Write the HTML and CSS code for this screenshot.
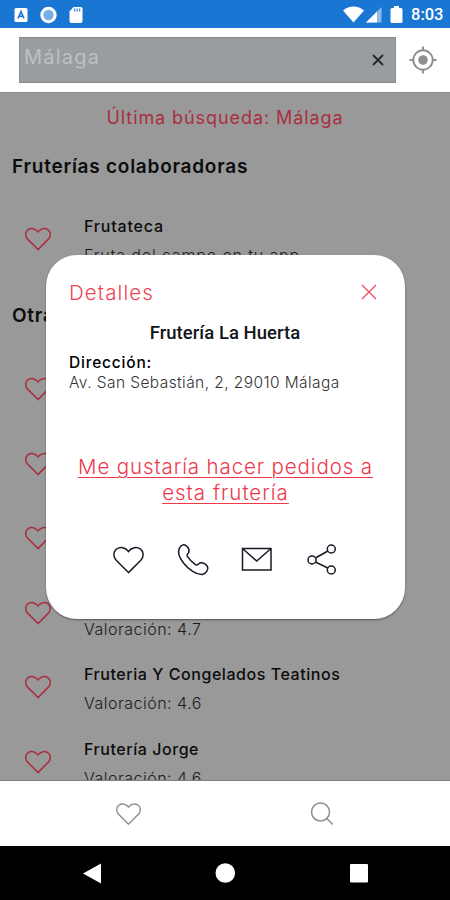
FILE: index.html
```html
<!DOCTYPE html>
<html lang="es">
<head>
<meta charset="utf-8">
<title>Fruterías</title>
<link rel="stylesheet" href="styles.css">
</head>
<body>
<svg width="0" height="0" class="defs">
  <symbol id="heart" viewBox="0 0 32 28"><path d="M16 27 L3.300 14.200 C-0.200 10.400 0.200 5.300 3.600 2.800 C7.400 0 12.800 0.800 16 5.200 C19.200 0.800 24.600 0 28.400 2.800 C31.800 5.300 32.200 10.400 28.700 14.200 Z"/></symbol>
</svg>
<div class="phone">
  <div class="status">
    <svg class="st-left" width="72" height="20" viewBox="0 0 72 20">
      <rect x="0.500" y="3" width="13" height="14" rx="1.500" fill="#fff"/>
      <path d="M4 13.500 L7 6.500 L10 13.500 M5 11.300 H9" fill="none" stroke="#1976d2" stroke-width="1.600"/>
      <circle cx="34.500" cy="10" r="6.700" fill="#75aee7" stroke="#fff" stroke-width="3"/>
      <path d="M59.500 2 H67 Q68.500 2 68.500 3.500 V16 Q68.500 18 67 18 H57 Q55.500 18 55.500 16 V6.500 Z" fill="#fff"/>
      <path d="M60.700 3.500v3M63.200 3.500v3M65.700 3.500v3" stroke="#1976d2" stroke-width="1.100"/>
    </svg>
    <svg class="st-right" width="62" height="20" viewBox="0 0 62 20">
      <path d="M0 5.500 C6 0.300 15 0.300 21 5.500 L10.500 17.500 Z" fill="#fff"/>
      <path d="M38.500 2 V17.500 H23 Z" fill="#8dbbe9"/>
      <path d="M34 6.500 V17.500 H23 Z" fill="#fff"/>
      <path d="M51 1 h5 v2 h2 q1.500 0 1.500 1.500 v12 q0 1.500 -1.500 1.500 h-9 q-1.500 0 -1.500 -1.500 v-12 q0 -1.500 1.500 -1.500 h2 z" fill="#fff"/>
    </svg>
    <span class="time">8:03</span>
  </div>
  <div class="header">
    <div class="search">
      <span class="query">Málaga</span>
      <svg width="12" height="12" viewBox="0 0 12 12"><path d="M1 1 L11 11 M11 1 L1 11" stroke="#23282b" stroke-width="1.800"/></svg>
    </div>
    <svg class="locate" width="28" height="28" viewBox="0 0 28 28">
      <g fill="none" stroke="#8f8f8f" stroke-width="1.900"><circle cx="14" cy="14" r="9.700"/><path d="M14 0.500 V5 M14 23 V27.500 M0.500 14 H5 M23 14 H27.500"/></g>
      <circle cx="14" cy="14" r="4.800" fill="#8f8f8f"/>
    </svg>
  </div>
  <div class="content">
    <div class="last"><span>Última búsqueda: Málaga</span></div>
    <h2 class="first-title">Fruterías colaboradoras</h2>
    <div class="row"><svg class="fav"><use href="#heart"/></svg><div class="info"><b class="n1">Frutateca</b><span class="s1">Fruta del campo en tu app</span></div></div>
    <h2 class="second-title">Otras</h2>
    <div class="row"><svg class="fav"><use href="#heart"/></svg></div>
    <div class="row"><svg class="fav"><use href="#heart"/></svg></div>
    <div class="row"><svg class="fav"><use href="#heart"/></svg></div>
    <div class="row"><svg class="fav"><use href="#heart"/></svg><div class="info"><b>&nbsp;</b><span>Valoración: 4.7</span></div></div>
    <div class="row"><svg class="fav"><use href="#heart"/></svg><div class="info"><b class="n2">Fruteria Y Congelados Teatinos</b><span>Valoración: 4.6</span></div></div>
    <div class="row"><svg class="fav"><use href="#heart"/></svg><div class="info"><b class="n3">Frutería Jorge</b><span>Valoración: 4.6</span></div></div>
  </div>
  <div class="tabs">
    <svg class="tab-heart"><use href="#heart"/></svg>
    <svg width="24" height="24" viewBox="0 0 24 24" fill="none" stroke="#8e8e8e" stroke-width="1.500"><circle cx="10.500" cy="10" r="9"/><path d="M16.800 16.500 L22.800 22.500"/></svg>
  </div>
  <div class="nav">
    <svg width="450" height="54" viewBox="0 0 450 54" fill="#fff"><path d="M83 27.500 L101 17.500 V37.500 Z"/><circle cx="225.300" cy="27" r="9.800"/><rect x="350" y="18" width="18" height="18.500" rx="1"/></svg>
  </div>
  <div class="modal">
    <div class="modal-head"><span class="details">Detalles</span>
      <svg width="16" height="16" viewBox="0 0 16 16"><path d="M1 1 L15 15 M15 1 L1 15" stroke="#ee4c5c" stroke-width="1.300"/></svg>
    </div>
    <div class="shop">Frutería La Huerta</div>
    <div class="label">Dirección:</div>
    <div class="address">Av. San Sebastián, 2, 29010 Málaga</div>
    <a class="order"><span class="l1">Me gustaría hacer pedidos a</span><br><span class="l2">esta frutería</span></a>
    <div class="actions">
      <svg class="act-heart"><use href="#heart"/></svg>
      <svg width="32" height="32" viewBox="0 0 32 32"><path d="M2.300 4.300 C4 1.300 6.500 -0.300 9 1.600 C11.300 3.400 12.600 6.300 11.600 8.600 C10.800 10 9.300 10.300 10.200 12.200 C12.300 15.500 15.300 18.600 18.700 20.800 C20.700 21.800 21.400 19.300 23.600 18.800 C26.400 18.200 30 20.800 30.700 23.300 C31.500 26 28.800 29.500 25.500 30.500 C19.500 31 11.500 25.500 6.500 19 C2.800 14 0 8.500 2.300 4.300 Z"/></svg>
      <svg width="32" height="32" viewBox="0 0 32 32"><path d="M1.500 4.500 H30 V26 H1.500 Z M1.500 4.500 L15.700 17 L30 4.500"/></svg>
      <svg width="32" height="32" viewBox="0 0 32 32"><circle cx="6" cy="16" r="4"/><circle cx="25.300" cy="5" r="4"/><circle cx="25.300" cy="26" r="4"/><path d="M9.500 14 L21.800 7 M9.500 18 L21.800 24"/></svg>
    </div>
  </div>
</div>
</body>
</html>
```
FILE: styles.css
```css
* { box-sizing: border-box; }
body { margin: 0; font-family: Inter, "Open Sans", sans-serif; }
.defs { position: absolute; }
.phone { position: relative; width: 450px; height: 900px; overflow: hidden; display: flex; flex-direction: column; background: #fff; }
svg { flex: none; overflow: visible; }
.status { height: 28px; flex: none; background: #1976d2; display: flex; align-items: center; padding: 2px 5px 0 14px; }
.st-right { margin-left: auto; }
.time { color: #fff; font: 500 16.500px/20px Roboto, sans-serif; margin-left: 6px; width: 34px; white-space: nowrap; }
.header { height: 64px; flex: none; display: flex; align-items: center; padding: 0 13px 0 19px; }
.search { width: 377px; height: 46px; margin-top: -1px; background: #989d9f; border: 1px solid #8c8f91; display: flex; justify-content: space-between; padding: 0 11px 0 4px; align-items: center; }
.query { color: #bdc0c1; font-size: 20px; letter-spacing: 1.200px; margin-top: -5px; }
.locate { margin-left: auto; }
.content { height: 689px; flex: none; overflow: hidden; background: #999; color: #0c0c0c; border-top: 1px solid #8c8c8c; border-bottom: 1px solid #808080; }
.last { height: 50px; line-height: 50px; text-align: center; color: #a92f40; font-size: 18px; letter-spacing: 0.920px; }
h2 { margin: 0; padding-left: 12px; font-size: 19px; font-weight: 600; line-height: 24px; letter-spacing: 0.750px; }
.first-title { margin-top: 12px; margin-bottom: 31px; }
.second-title { margin-top: 19px; margin-bottom: 32.500px; }
.row { height: 74.600px; display: flex; padding-left: 25px; }
.fav { width: 26px; height: 24px; margin-top: 17px; fill: none; stroke: #a92f40; stroke-width: 1.900; }
.info { margin-left: 33px; display: flex; flex-direction: column; font-size: 16px; line-height: 29px; letter-spacing: 0.500px; white-space: nowrap; margin-top: 2px; }
.info b { font-weight: 500; letter-spacing: 0.550px; }
.info .n1 { letter-spacing: 0.800px; }
.info .s1 { letter-spacing: 0.850px; }
.info span { font-weight: 300; color: #1c1c1c; }
.tabs { height: 65px; flex: none; display: flex; align-items: center; padding: 0 116px 0 116px; justify-content: space-between; }
.tab-heart { width: 25px; height: 22px; fill: none; stroke: #8e8e8e; stroke-width: 1.800; }
.nav { height: 54px; background: #000; }
.modal { position: absolute; left: 46px; top: 255px; width: 359px; height: 364px; border-radius: 31px; background: #fff; box-shadow: 0 1px 2px rgba(0,0,0,.45); padding: 23px 23px 0; }
.modal-head { height: 28px; display: flex; justify-content: space-between; align-items: center; padding-right: 5px; }
.details { color: #f04556; font-size: 20.500px; font-weight: 300; letter-spacing: 1.100px; }
.shop { text-align: center; margin-top: 15px; font: 500 18.500px/24px Roboto, sans-serif; color: #10151b; margin-right: 1px; letter-spacing: 0.050px; }
.label { margin-top: 8px; font-size: 15.500px; line-height: 20px; font-weight: 500; letter-spacing: 0.800px; }
.address { font-size: 15.500px; line-height: 20px; font-weight: 300; color: #333; white-space: nowrap; letter-spacing: 0.420px; }
.order { display: block; margin-top: 61px; text-align: center; color: #f0384c; font-size: 20.500px; font-weight: 300; line-height: 26px; text-decoration: underline; text-decoration-thickness: 1px; text-underline-offset: 3px; white-space: nowrap; }
.l1 { letter-spacing: 0.870px; }
.l2 { letter-spacing: 1px; }
.actions { display: flex; justify-content: space-between; align-items: center; margin-top: 38px; padding: 0 44px; height: 32px; fill: none; stroke: #141b24; stroke-width: 1.500; }
.act-heart { width: 31px; height: 28px; }
```
